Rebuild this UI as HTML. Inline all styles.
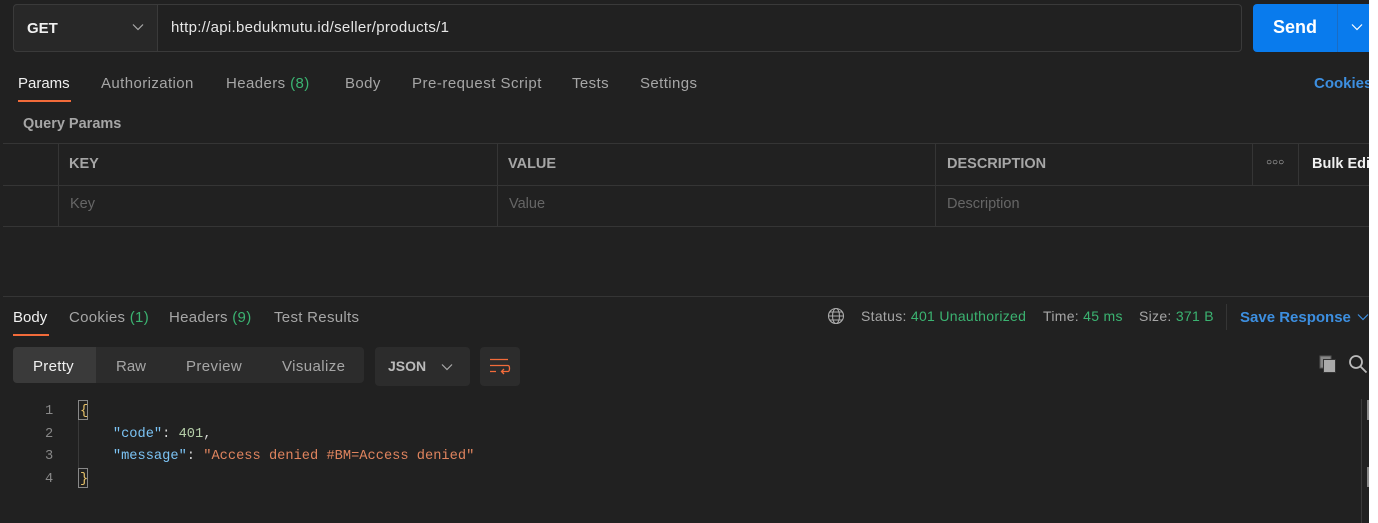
<!DOCTYPE html>
<html><head><meta charset="utf-8"><style>
*{margin:0;padding:0;box-sizing:border-box}
body{width:1378px;height:523px;background:#fff;position:relative;overflow:hidden;font-family:"Liberation Sans",sans-serif;font-size:14px;color:#a6a6a6}
#app{position:absolute;left:0;top:0;width:1369px;height:523px;background:#212121;overflow:hidden}
.a{position:absolute;white-space:nowrap}
.t{font-size:15px;letter-spacing:0.4px;top:75px}
.g{color:#3bb371}
.hl{position:absolute;height:1px;background:#353535}
.vl{position:absolute;width:1px;background:#353535}
.mono{font-family:"Liberation Mono",monospace;font-size:13.7px}
</style></head><body><div id="app">
<div class="a" style="left:13px;top:4px;width:1229px;height:48px;border:1px solid #3a3a3a;border-radius:4px;background:#212121"></div>
<div class="a" style="left:13px;top:4px;width:145px;height:48px;background:#282828;border:1px solid #3a3a3a;border-radius:4px 0 0 4px"></div>
<div class="a" style="left:27px;top:20px;color:#f0f0f0;font-weight:bold;font-size:15px">GET</div>
<svg class="a" style="left:132px;top:23px" width="12" height="8"><path d="M1 1.5l5 5 5-5" stroke="#aaa" fill="none" stroke-width="1.2"/></svg>
<div class="a" style="left:171px;top:19px;color:#e6e6e6;font-size:15px;letter-spacing:0.3px">http://api.bedukmutu.id/seller/products/1</div>
<div class="a" style="left:1253px;top:4px;width:130px;height:48px;background:#097bed;border-radius:4px"></div>
<div class="vl" style="left:1337px;top:4px;height:48px;background:#1a6cc4"></div>
<div class="a" style="left:1273px;top:17px;color:#fff;font-weight:bold;font-size:18px">Send</div>
<svg class="a" style="left:1351px;top:23px" width="12" height="8"><path d="M1 1.5l5 5 5-5" stroke="#fff" fill="none" stroke-width="1.2"/></svg>
<div class="a t" style="left:18px;color:#f0f0f0;letter-spacing:0">Params</div>
<div class="a" style="left:18px;top:100px;width:53px;height:2px;background:#f26b3a"></div>
<div class="a t" style="left:101px">Authorization</div>
<div class="a t" style="left:226px">Headers <span class="g">(8)</span></div>
<div class="a t" style="left:345px">Body</div>
<div class="a t" style="left:412px;letter-spacing:0.5px">Pre-request Script</div>
<div class="a t" style="left:572px">Tests</div>
<div class="a t" style="left:640px">Settings</div>
<div class="a" style="left:1314px;top:75px;color:#3d8fe0;font-weight:bold;font-size:15px">Cookies</div>
<div class="a" style="left:23px;top:116px;color:#a6a6a6;font-weight:bold;font-size:14.5px">Query Params</div>
<div class="hl" style="left:3px;top:143px;width:1366px"></div>
<div class="hl" style="left:3px;top:185px;width:1366px"></div>
<div class="hl" style="left:3px;top:226px;width:1366px"></div>
<div class="vl" style="left:58px;top:143px;height:83px"></div>
<div class="vl" style="left:497px;top:143px;height:83px"></div>
<div class="vl" style="left:935px;top:143px;height:83px"></div>
<div class="vl" style="left:1252px;top:143px;height:42px"></div>
<div class="vl" style="left:1298px;top:143px;height:42px"></div>
<div class="a" style="left:69px;top:156px;font-weight:bold;color:#a6a6a6;font-size:14.5px">KEY</div>
<div class="a" style="left:508px;top:156px;font-weight:bold;color:#a6a6a6;font-size:14.5px">VALUE</div>
<div class="a" style="left:947px;top:156px;font-weight:bold;color:#a6a6a6;font-size:14.5px">DESCRIPTION</div>
<div class="a" style="left:1266px;top:157px;color:#ccc;font-size:10px;letter-spacing:0">○○○</div>
<div class="a" style="left:1312px;top:156px;font-weight:bold;color:#f0f0f0;font-size:14.5px">Bulk Edit</div>
<div class="a" style="left:70px;top:196px;color:#666;font-size:14.5px">Key</div>
<div class="a" style="left:509px;top:196px;color:#666;font-size:14.5px">Value</div>
<div class="a" style="left:947px;top:196px;color:#666;font-size:14.5px">Description</div>
<div class="hl" style="left:3px;top:296px;width:1366px"></div>
<div class="a" style="left:13px;top:309px;color:#f0f0f0;font-size:15px">Body</div>
<div class="a" style="left:13px;top:334px;width:36px;height:2px;background:#f26b3a"></div>
<div class="a" style="left:69px;top:309px;font-size:15px;letter-spacing:0.3px">Cookies <span class="g">(1)</span></div>
<div class="a" style="left:169px;top:309px;font-size:15px;letter-spacing:0.3px">Headers <span class="g">(9)</span></div>
<div class="a" style="left:274px;top:309px;font-size:15px;letter-spacing:0.3px">Test Results</div>
<svg class="a" style="left:827px;top:307px" width="18" height="18" fill="none" stroke="#aaa" stroke-width="1.1"><circle cx="9" cy="9" r="7.5"/><ellipse cx="9" cy="9" rx="3.5" ry="7.5"/><path d="M1.5 9h15M3 5h12M3 13h12"/></svg>
<div class="a" style="left:861px;top:308px;letter-spacing:0.3px">Status: <span class="g">401 Unauthorized</span></div>
<div class="a" style="left:1043px;top:308px;letter-spacing:0.3px">Time: <span class="g">45 ms</span></div>
<div class="a" style="left:1139px;top:308px;letter-spacing:0.3px">Size: <span class="g">371 B</span></div>
<div class="vl" style="left:1226px;top:304px;height:26px"></div>
<div class="a" style="left:1240px;top:309px;color:#3d8fe0;font-weight:bold;font-size:15px">Save Response</div>
<svg class="a" style="left:1357px;top:313px" width="12" height="8"><path d="M1 1.5l5 5 5-5" stroke="#3d8fe0" fill="none" stroke-width="1.2"/></svg>
<div class="a" style="left:13px;top:347px;width:351px;height:36px;background:#2c2c2c;border-radius:4px"></div>
<div class="a" style="left:13px;top:347px;width:83px;height:36px;background:#3a3a3a;border-radius:4px 0 0 4px"></div>
<div class="a" style="left:33px;top:358px;color:#f0f0f0;font-size:15px;letter-spacing:0.3px">Pretty</div>
<div class="a" style="left:116px;top:358px;font-size:15px">Raw</div>
<div class="a" style="left:186px;top:358px;font-size:15px;letter-spacing:0.4px">Preview</div>
<div class="a" style="left:282px;top:358px;font-size:15px;letter-spacing:0.4px">Visualize</div>
<div class="a" style="left:375px;top:347px;width:95px;height:39px;background:#2c2c2c;border-radius:4px"></div>
<div class="a" style="left:388px;top:358px;font-weight:bold;color:#bbb">JSON</div>
<svg class="a" style="left:441px;top:363px" width="12" height="8"><path d="M1 1.5l5 5 5-5" stroke="#aaa" fill="none" stroke-width="1.2"/></svg>
<div class="a" style="left:480px;top:347px;width:40px;height:39px;background:#2c2c2c;border-radius:4px"></div>
<svg class="a" style="left:489px;top:358px" width="22" height="18" fill="none" stroke="#f26b3a" stroke-width="1.3"><path d="M1 1.5h18M1 7.5h18c2 0 2 6 0 6h-6M15 11l-2.5 2.5 2.5 2.5M1 13.5h6"/></svg>
<svg class="a" style="left:1319px;top:355px" width="18" height="18"><rect x="1" y="1" width="11" height="12" fill="#888" stroke="#555"/><rect x="4.5" y="4.5" width="12" height="13" fill="#aaa" stroke="#333"/></svg>
<svg class="a" style="left:1348px;top:354px" width="21" height="20" fill="none" stroke="#bbb" stroke-width="1.8"><circle cx="8" cy="8" r="6"/><path d="M12.5 12.5l6 6"/></svg>
<div class="vl" style="left:1361px;top:399px;height:124px;background:#3a3a3a"></div>
<div class="a" style="left:1367px;top:400px;width:3px;height:20px;background:#888"></div>
<div class="a" style="left:1367px;top:467px;width:3px;height:20px;background:#888"></div>
<div class="a mono" style="left:45px;top:401px;color:#888;line-height:22.7px">1<br>2<br>3<br>4</div>
<div class="a" style="left:78px;top:400px;width:10px;height:20px;border:1px solid #888"></div>
<div class="a" style="left:78px;top:468px;width:10px;height:20px;border:1px solid #888"></div>
<div class="vl" style="left:78px;top:420px;height:48px;background:#3a3a3a"></div>
<div class="a mono" style="left:80px;top:401px;line-height:22.7px;color:#d4d4d4;white-space:pre"><span style="color:#e8c36a">{</span>
    <span style="color:#7cc4f5">"code"</span>: <span style="color:#b5cea8">401</span>,
    <span style="color:#7cc4f5">"message"</span>: <span style="color:#e0845e">"Access denied #BM=Access denied"</span>
<span style="color:#e8c36a">}</span></div>
</div></body></html>
